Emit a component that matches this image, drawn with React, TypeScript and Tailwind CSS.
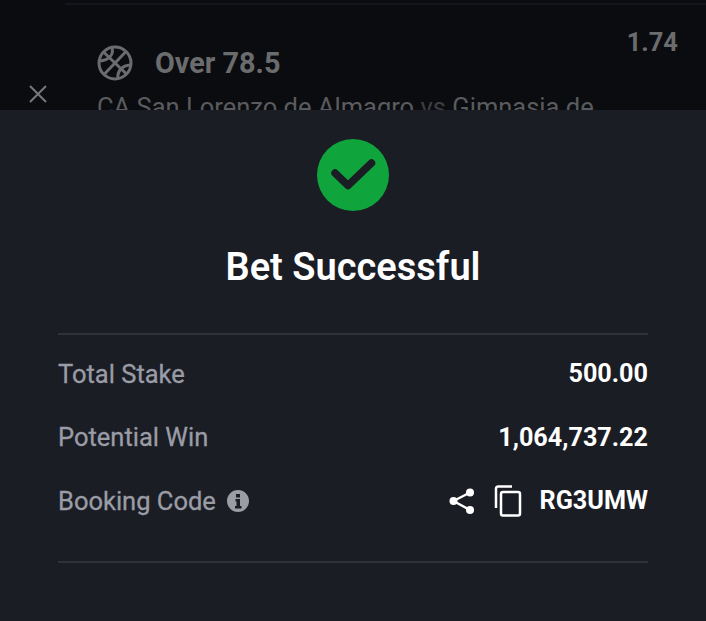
const font = { fontFamily: "Roboto, sans-serif" };

function BasketballIcon() {
  return (
    <svg viewBox="0 0 36 36" className="h-[36px] w-[36px] shrink-0" fill="none" stroke="#6b6c6e" strokeWidth="3" aria-hidden="true">
      <circle cx="18" cy="18" r="16" />
      <path d="M6.5 7 L29.5 29" />
      <path d="M29 6.5 L7 29.5" />
      <path d="M15 2.5 C17 10 12 15 2.5 16" />
      <path d="M33.5 20 C25 20.5 20 26 21 33.5" />
    </svg>
  );
}

function SummaryRow({ label, children }: { label: React.ReactNode; children: React.ReactNode }) {
  return (
    <div className="flex h-[63.5px] items-center justify-between">
      <div className="flex items-center gap-[10px] text-[25.5px] text-[#9a9ca6] [-webkit-text-stroke:0.3px_#9a9ca6]">{label}</div>
      <div className="flex items-center pt-[1px] text-[25.2px] font-bold text-white">{children}</div>
    </div>
  );
}

export default function App() {
  return (
    <div style={font} className="flex h-[621px] w-[706px] flex-col overflow-hidden bg-[#1a1d24]">
      {/* betslip behind the sheet */}
      <div className="flex h-[110px] shrink-0 overflow-hidden bg-[#0b0c10]">
        <div className="flex w-[97px] shrink-0 items-start pl-[28px] pt-[84px]">
          <svg viewBox="0 0 20 20" className="h-[20px] w-[20px]" fill="none" stroke="#77787b" strokeWidth="2" aria-hidden="true">
            <path d="M2 2L18 18M18 2L2 18" />
          </svg>
        </div>
        <div className="min-w-0 flex-1">
          <div className="ml-[-32px] mt-[3px] h-[2px] bg-[#15161b]" />
          <div className="flex justify-between pr-[28px]">
            <div className="pt-[40px]">
              <div className="flex items-center gap-[22px]">
                <BasketballIcon />
                <span className="text-[28.8px] font-bold leading-[36px] text-[#6b6c6e]">Over 78.5</span>
              </div>
              <div className="mt-[10px] whitespace-nowrap text-[25.5px] leading-[32px] text-[#5a5b5e]">
                CA San Lorenzo de Almagro <span className="text-[#3d3e42]">vs</span> Gimnasia de
              </div>
            </div>
            <span className="pt-[19px] text-[25.5px] font-bold leading-[36px] text-[#6b6c6e]">1.74</span>
          </div>
        </div>
      </div>

      {/* success sheet */}
      <div className="flex flex-1 flex-col items-center px-[58px] pt-[29px]">
        <svg viewBox="0 0 72 72" className="h-[72px] w-[72px]" aria-hidden="true">
          <circle cx="36" cy="36" r="36" fill="#10a53c" />
          <path d="M18 34 L31 46.5 L54.500 24" fill="none" stroke="#1a1d24" strokeWidth="7.500" strokeLinecap="round" strokeLinejoin="round" />
        </svg>
        <h1 className="mt-[33px] text-[38px] font-semibold leading-[46px] text-white">Bet Successful</h1>
        <div className="mt-[43px] w-full border-y-2 border-[#2e313b] pb-[28px] pt-[7px]">
          <SummaryRow label="Total Stake">500.00</SummaryRow>
          <SummaryRow label="Potential Win">1,064,737.22</SummaryRow>
          <SummaryRow
            label={
              <>
                Booking Code
                <svg viewBox="0 0 24 24" className="h-[24px] w-[24px]" aria-hidden="true">
                  <path
                    fill="#9a9ca6"
                    fillRule="evenodd"
                    d="M12 1a11 11 0 1 0 0 22 11 11 0 0 0 0-22ZM10 5h4v3.500h-4ZM9.500 10h4.500v7h1.500v2.500h-6.500V17h1.500v-4.500H9.500Z"
                  />
                </svg>
              </>
            }
          >
            <svg viewBox="0 0 28 28" className="mr-[18px] h-[28px] w-[28px]" fill="#ffffff" aria-hidden="true">
              <circle cx="22" cy="5.500" r="4" />
              <circle cx="5.500" cy="14" r="4" />
              <circle cx="22" cy="23" r="4" />
              <path d="M5.500 14L22 5.500M5.500 14L22 23" stroke="#ffffff" strokeWidth="2.500" />
            </svg>
            <svg viewBox="0 0 28 32" className="mr-[18px] h-[32px] w-[28px]" fill="none" stroke="#ffffff" strokeWidth="2.500" aria-hidden="true">
              <path d="M2 23V3.500A2 2 0 0 1 4 1.500H18" />
              <rect x="7" y="7" width="19" height="23.500" rx="2" />
            </svg>
            RG3UMW
          </SummaryRow>
        </div>
      </div>
    </div>
  );
}
